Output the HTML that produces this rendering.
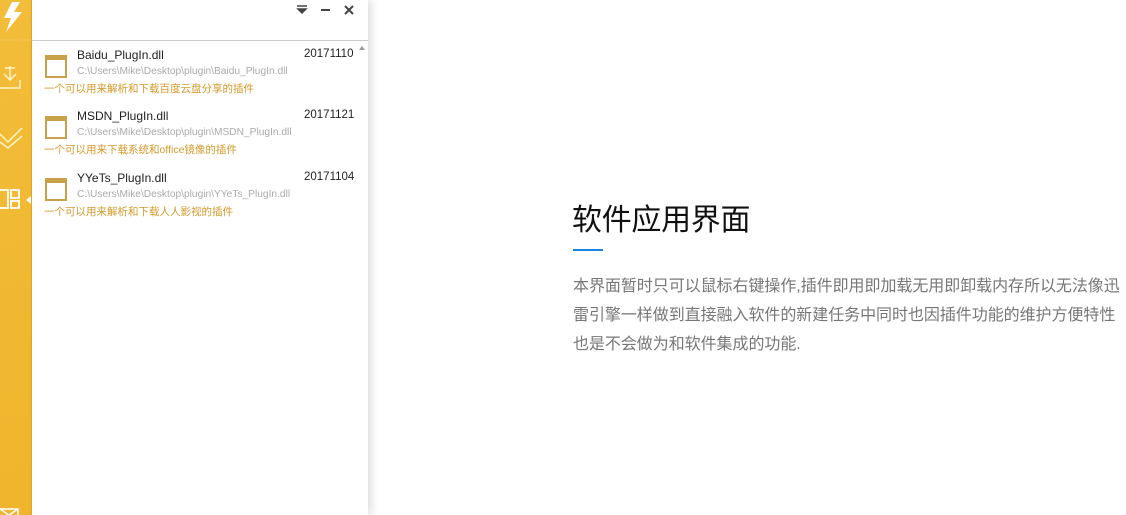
<!DOCTYPE html>
<html><head><meta charset="utf-8"><style>
body{margin:0;width:1126px;height:515px;overflow:hidden;background:#fff;font-family:"Liberation Sans","Noto Sans CJK SC",sans-serif;position:relative}
.side{position:absolute;left:0;top:0;width:31px;height:515px;background:linear-gradient(160deg,#f2bd3a,#efb52c);border-right:1px solid #e4a81f}
.panel{position:absolute;left:32px;top:0;width:336px;height:515px;background:#fff;box-shadow:4px 0 8px rgba(0,0,0,.12)}
.top{height:40px;border-bottom:1px solid #ccc;position:relative}
.item{position:absolute;left:0;width:336px;height:61px}
.ic{position:absolute;left:13px;top:8px;width:18px;height:16px;border:2px solid #c9a14a;border-top-width:5px}
.nm{position:absolute;left:45px;top:1px;font-size:12px;color:#222}
.dt{position:absolute;left:272px;top:1px;font-size:11.5px;color:#222}
.pt{position:absolute;left:45px;top:19px;font-size:10.2px;color:#aaa}
.ds{position:absolute;left:12px;top:34px;font-size:10.5px;color:#d49a2a}
h1{position:absolute;left:572px;top:195px;margin:0;font-weight:normal;font-size:30px;letter-spacing:-0.3px;color:#111}
.bl{position:absolute;left:573px;top:249px;width:30px;height:2px;background:#1a84e0}
p{position:absolute;left:573px;top:272px;margin:0;width:600px;font-size:16px;line-height:29px;color:#777;letter-spacing:-0.05px;white-space:nowrap}
</style></head><body>
<div class="side">
<svg width="31" height="515" style="position:absolute;left:0;top:0">
<path d="M12 2 L4 18 L11 18 L6 32 L22 12 L14 12 L20 2Z" fill="#fff"/>
<line x1="0" y1="40" x2="31" y2="40" stroke="#f7d98a" stroke-dasharray="1 2"/>
<path d="M0 88 h20 v-8 M4 74 l6 6 l6-6 M10 66 v14 M5 68 h10" stroke="#fff3c8" stroke-width="1.5" fill="none"/>
<path d="M0 134 l8 8 l14-14 M0 142 l8 6 l14-12" stroke="#fff3c8" stroke-width="1.5" fill="none"/>
<path d="M0 190 h8 v18 h-8 M11 190 h8 v8 h-8z M11 201 h8 v7 h-8z" stroke="#fff" stroke-width="1.8" fill="none"/>
<path d="M26 200 l5 -4 v8z" fill="#fff"/>
<path d="M0 509 h18 v6 M0 509 l9 6 l9-6" stroke="#fff" stroke-width="1.5" fill="none"/>
</svg></div>
<div class="panel">
<div class="top">
<svg width="80" height="20" style="position:absolute;left:262px;top:3px">
<path d="M3 3 h10 M4 6 h8 l-4 4z" stroke="#444" stroke-width="1.5" fill="#444"/>
<line x1="27" y1="7" x2="36" y2="7" stroke="#444" stroke-width="2"/>
<path d="M51 3 l8 8 M59 3 l-8 8" stroke="#444" stroke-width="2"/>
</svg>
</div>
<svg width="10" height="8" style="position:absolute;left:326px;top:44px"><path d="M1 6 l3-4 l3 4z" fill="#999"/></svg>
<div class="item" style="top:47px"><div class="ic"></div><div class="nm">Baidu_PlugIn.dll</div><div class="dt">20171110</div><div class="pt">C:\Users\Mike\Desktop\plugin\Baidu_PlugIn.dll</div><div class="ds">一个可以用来解析和下载百度云盘分享的插件</div></div>
<div class="item" style="top:108px"><div class="ic"></div><div class="nm">MSDN_PlugIn.dll</div><div class="dt">20171121</div><div class="pt">C:\Users\Mike\Desktop\plugin\MSDN_PlugIn.dll</div><div class="ds">一个可以用来下载系统和office镜像的插件</div></div>
<div class="item" style="top:170px"><div class="ic"></div><div class="nm">YYeTs_PlugIn.dll</div><div class="dt">20171104</div><div class="pt">C:\Users\Mike\Desktop\plugin\YYeTs_PlugIn.dll</div><div class="ds">一个可以用来解析和下载人人影视的插件</div></div>
</div>
<h1>软件应用界面</h1>
<div class="bl"></div>
<p>本界面暂时只可以鼠标右键操作,插件即用即加载无用即卸载内存所以无法像迅<br>雷引擎一样做到直接融入软件的新建任务中同时也因插件功能的维护方便特性<br>也是不会做为和软件集成的功能.</p>
</body></html>
